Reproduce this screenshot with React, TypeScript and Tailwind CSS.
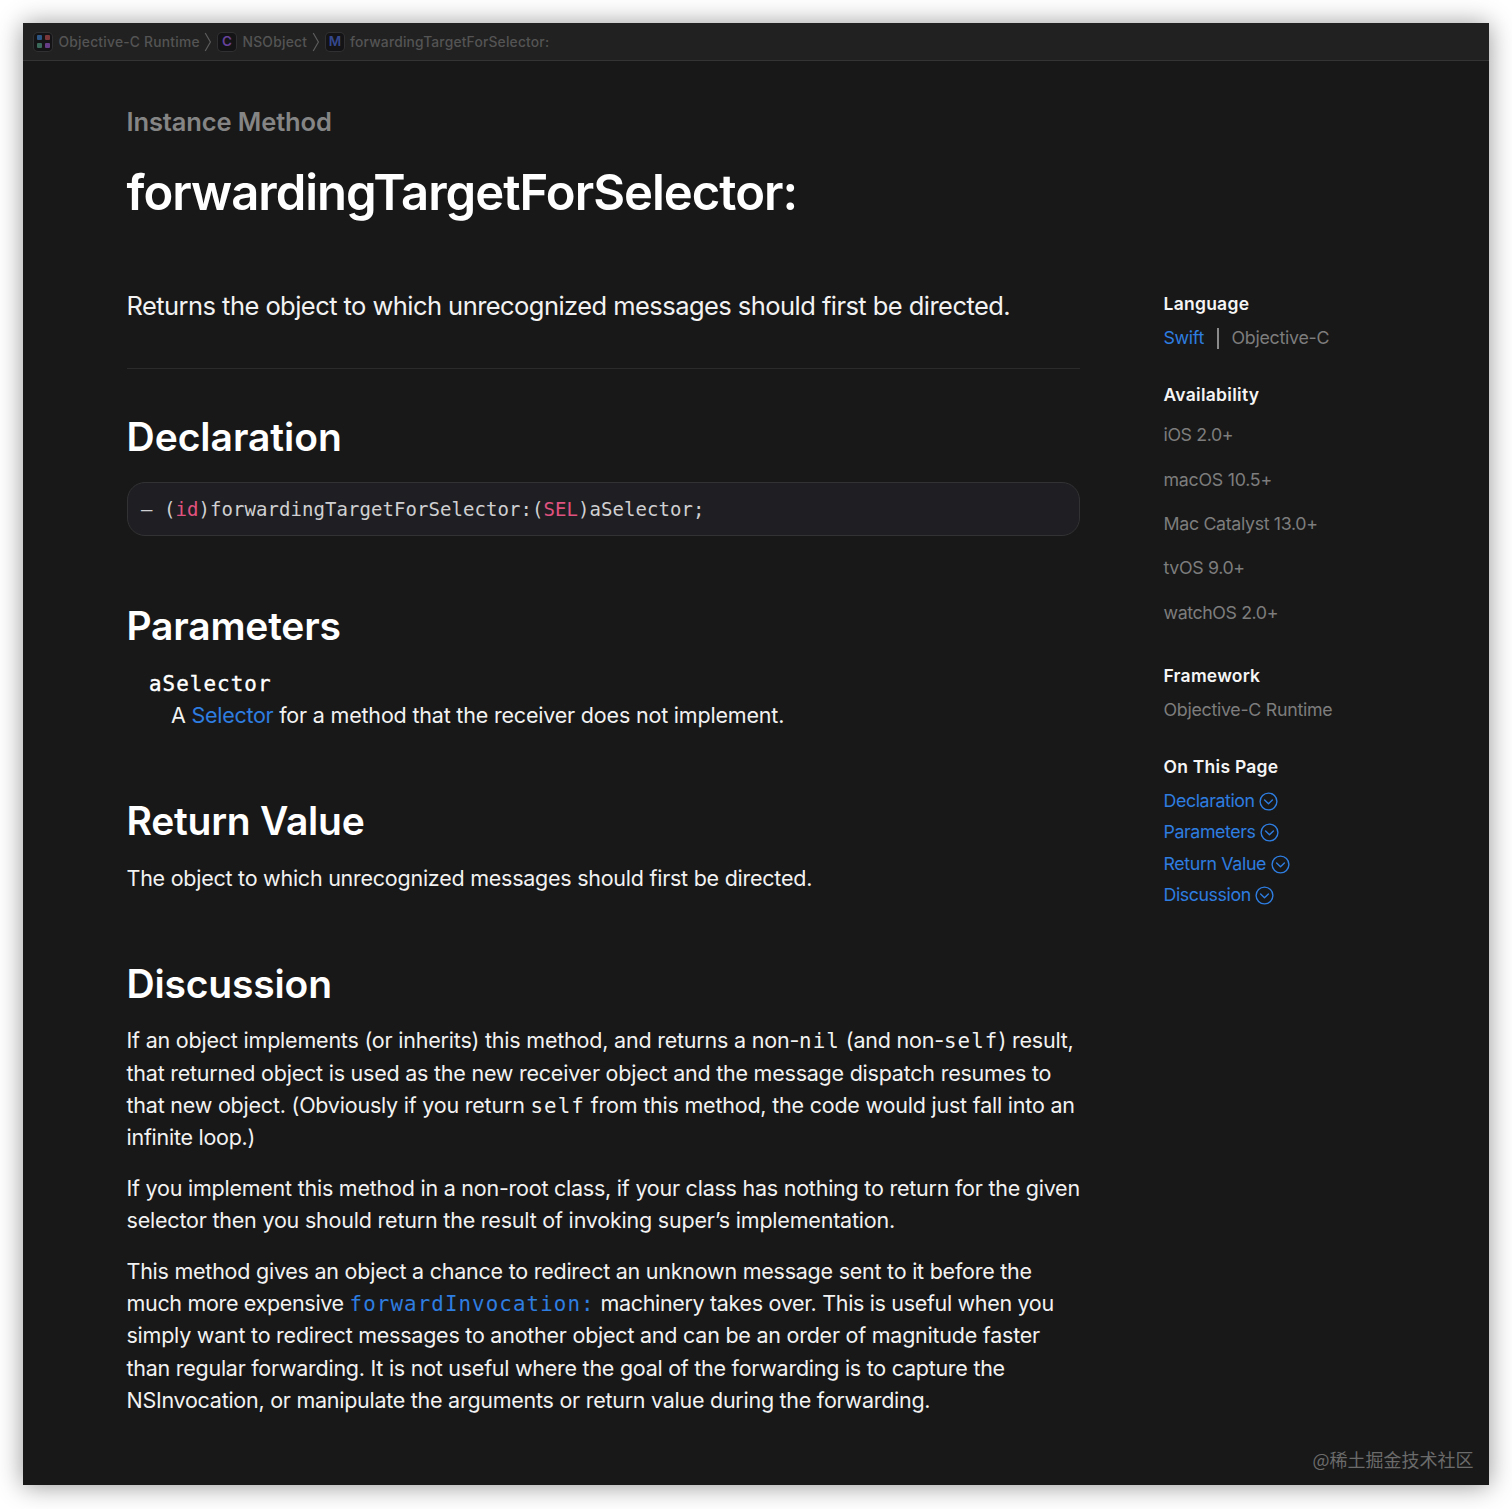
import React from 'react';

function Separator() {
  return (
    <svg className="h-[20px] w-[8px] shrink-0" viewBox="0 0 8 20" fill="none" stroke="#5c5c5c" strokeWidth="1.2">
      <path d="M1.2 1 L6.4 10 L1.2 19" />
    </svg>
  );
}

function LetterBadge({ letter, color }: { letter: string; color: string }) {
  return (
    <span
      className={`flex h-[18px] w-[18px] shrink-0 items-center justify-center rounded-[4px] bg-[#141416] text-[13.5px] leading-none font-semibold ring-1 ring-[#303032] ${color}`}
    >
      {letter}
    </span>
  );
}

function FrameworkBadge() {
  return (
    <span className="grid h-[18px] w-[18px] shrink-0 grid-cols-[5px_5px] place-content-center gap-[3px] rounded-[4px] bg-[#141416] ring-1 ring-[#303032]">
      <i className="h-[5px] w-[5px] rounded-[1px] bg-[#2d5584]" />
      <i className="h-[5px] w-[5px] rounded-[1px] bg-[#7a3638]" />
      <i className="h-[5px] w-[5px] rounded-[1px] bg-[#3b6959]" />
      <i className="h-[5px] w-[5px] rounded-[1px] bg-[#643d86]" />
    </span>
  );
}

function Breadcrumbs() {
  return (
    <nav className="flex h-[38px] items-center border-b border-[#343434] bg-[#212121] pl-[11px] text-[13.8px] font-medium whitespace-nowrap text-[#545454]">
      <FrameworkBadge />
      <span className="mt-px ml-[6.5px] w-[145.5px] tracking-[0.237px]">Objective-C Runtime</span>
      <Separator />
      <span className="mt-px ml-[6px] flex">
        <LetterBadge letter="C" color="text-[#67429a]" />
      </span>
      <span className="mt-px ml-[6.5px] w-[69.5px] tracking-[0.25px]">NSObject</span>
      <Separator />
      <span className="mt-px ml-[6px] flex">
        <LetterBadge letter="M" color="text-[#34488f]" />
      </span>
      <span className="mt-px ml-[6px] tracking-[0.2px]">forwardingTargetForSelector:</span>
    </nav>
  );
}

function Heading({ children, className }: { children: React.ReactNode; className: string }) {
  return <h2 className={`text-[39px] leading-[50px] font-semibold text-white ${className}`}>{children}</h2>;
}

function Line({ children, className }: { children: React.ReactNode; className: string }) {
  return <span className={`block h-[32.4px] ${className}`}>{children}</span>;
}

function Code({ children, className = '' }: { children: React.ReactNode; className?: string }) {
  return (
    <code className={`font-['DejaVu_Sans_Mono',monospace] text-[20.8px] leading-none tracking-[1.1px] ${className}`}>
      {children}
    </code>
  );
}

function Article() {
  return (
    <main className="w-[953px] text-[21.5px] leading-[32.4px] whitespace-nowrap text-[#f2f2f2]">
      <p className="mt-[45px] text-[25.5px] leading-8 font-semibold tracking-[-0.121px] text-[#858585]">
        Instance Method
      </p>
      <h1 className="mt-[25px] text-[49px] leading-[60px] font-semibold tracking-[-0.991px] text-white">
        forwardingTargetForSelector:
      </h1>
      <p className="mt-[63px] text-[25.5px] leading-[40px] tracking-[-0.55px]">
        Returns the object to which unrecognized messages should first be directed.
      </p>
      <hr className="mt-[42px] border-[#2b2b2b]" />

      <Heading className="mt-[43px] tracking-[-0.028px]">Declaration</Heading>
      <pre className="mt-[20px] flex h-[54px] items-center rounded-[18px] border border-[#323234] bg-[#1f1f23] pl-[13.5px] font-['DejaVu_Sans_Mono',monospace] text-[19px] tracking-[0.06px] text-[#d0d0d2]">
        <span>
          — (<span className="text-[#e0527f]">id</span>)forwardingTargetForSelector:(
          <span className="text-[#e0527f]">SEL</span>)aSelector;
        </span>
      </pre>

      <Heading className="mt-[65px] tracking-[-0.203px]">Parameters</Heading>
      <dl>
        <dt className="mt-[15.5px] ml-[22.5px] h-[32.5px]">
          <Code className="text-white [-webkit-text-stroke:0.4px_white]">aSelector</Code>
        </dt>
        <dd className="ml-[44.5px] tracking-[-0.189px]">
          A <a className="tracking-[-0.296px] text-[#2e7de0]">Selector</a> for a method that the receiver does not
          implement.
        </dd>
      </dl>

      <Heading className="mt-[64.6px] tracking-[-0.24px]">Return Value</Heading>
      <p className="mt-[15.5px] tracking-[-0.25px]">
        The object to which unrecognized messages should first be directed.
      </p>

      <Heading className="mt-[64.6px] tracking-[-0.17px]">Discussion</Heading>
      <p className="mt-[15.8px]">
        <Line className="tracking-[-0.21px]">
          If an object implements (or inherits) this method, and returns a non-<Code>nil</Code> (and non-
          <Code>self</Code>) result,
        </Line>
        <Line className="tracking-[-0.229px]">
          that returned object is used as the new receiver object and the message dispatch resumes to
        </Line>
        <Line className="tracking-[-0.22px]">
          that new object. (Obviously if you return <Code>self</Code>{' '}
          <span className="tracking-[-0.213px]">from this method, the code would just fall into an</span>
        </Line>
        <Line className="tracking-[-0.267px]">infinite loop.)</Line>
      </p>
      <p className="mt-[18px]">
        <Line className="tracking-[-0.235px]">
          If you implement this method in a non-root class, if your class has nothing to return for the given
        </Line>
        <Line className="tracking-[-0.205px]">
          selector then you should return the result of invoking super’s implementation.
        </Line>
      </p>
      <p className="mt-[18px]">
        <Line className="tracking-[-0.243px]">
          This method gives an object a chance to redirect an unknown message sent to it before the
        </Line>
        <Line className="tracking-[-0.33px]">
          much more expensive <Code className="text-[#2e7de0]">forwardInvocation:</Code> machinery takes over. This is
          useful when you
        </Line>
        <Line className="tracking-[-0.24px]">
          simply want to redirect messages to another object and can be an order of magnitude faster
        </Line>
        <Line className="tracking-[-0.262px]">
          than regular forwarding. It is not useful where the goal of the forwarding is to capture the
        </Line>
        <Line className="tracking-[-0.265px]">
          NSInvocation, or manipulate the arguments or return value during the forwarding.
        </Line>
      </p>
    </main>
  );
}

function SideTitle({ children, className }: { children: React.ReactNode; className: string }) {
  return <h3 className={`text-[17.5px] leading-6 font-semibold text-[#f5f5f5] ${className}`}>{children}</h3>;
}

function JumpLink({ children, className }: { children: React.ReactNode; className: string }) {
  return (
    <a className="flex h-[31.4px] items-center text-[#2e7de0]">
      <span className={className}>{children}</span>
      <svg
        className="mt-[1px] ml-[4.5px] h-[19px] w-[19px]"
        viewBox="0 0 19 19"
        fill="none"
        stroke="currentColor"
        strokeWidth="1.4"
        strokeLinecap="round"
        strokeLinejoin="round"
      >
        <circle cx="9.5" cy="9.5" r="8.4" />
        <path d="M5.6 8 L9.5 11.7 L13.4 8" />
      </svg>
    </a>
  );
}

function Sidebar() {
  return (
    <aside className="mt-[231px] ml-[84px] text-[17.8px] leading-6 whitespace-nowrap text-[#7d7d7d]">
      <SideTitle className="tracking-[0.26px]">Language</SideTitle>
      <div className="mt-[10px] flex h-6 items-center">
        <a className="tracking-[-0.31px] text-[#2e7de0]">Swift</a>
        <span className="mr-[12.5px] ml-[13px] h-[21px] w-[2px] bg-[#8a8a8a]" />
        <span className="tracking-[-0.263px]">Objective-C</span>
      </div>

      <SideTitle className="mt-[32.5px] tracking-[0.28px]">Availability</SideTitle>
      <ul className="mt-[16.8px] flex flex-col gap-[20.4px]">
        <li className="tracking-[-0.4px]">iOS 2.0+</li>
        <li className="tracking-[-0.25px]">macOS 10.5+</li>
        <li className="tracking-[-0.33px]">Mac Catalyst 13.0+</li>
        <li className="tracking-[-0.35px]">tvOS 9.0+</li>
        <li className="tracking-[-0.4px]">watchOS 2.0+</li>
      </ul>

      <SideTitle className="mt-[38.7px] tracking-[0.22px]">Framework</SideTitle>
      <p className="mt-[10px] tracking-[-0.28px]">Objective-C Runtime</p>

      <SideTitle className="mt-[33px] tracking-[0.25px]">On This Page</SideTitle>
      <div className="mt-[6.5px]">
        <JumpLink className="tracking-[-0.4px]">Declaration</JumpLink>
        <JumpLink className="tracking-[-0.4px]">Parameters</JumpLink>
        <JumpLink className="tracking-[-0.36px]">Return Value</JumpLink>
        <JumpLink className="tracking-[-0.42px]">Discussion</JumpLink>
      </div>
    </aside>
  );
}

export default function App() {
  return (
    <div className="h-[1509px] w-[1512px] overflow-hidden bg-white pt-[23px] pl-[23px] font-['Inter','Noto_Sans_CJK_SC',sans-serif]">
      <div className="relative flex h-[1462px] w-[1465.5px] flex-col bg-[#181818] shadow-[0_1px_24px_rgba(0,0,0,0.42)]">
        <Breadcrumbs />
        <div className="flex pl-[103.5px]">
          <Article />
          <Sidebar />
        </div>
        <p className="absolute right-[15px] bottom-[12px] font-['Noto_Sans_CJK_SC',sans-serif] text-[18px] leading-[28px] text-[#6b6b6b]">
          @稀土掘金技术社区
        </p>
      </div>
    </div>
  );
}
